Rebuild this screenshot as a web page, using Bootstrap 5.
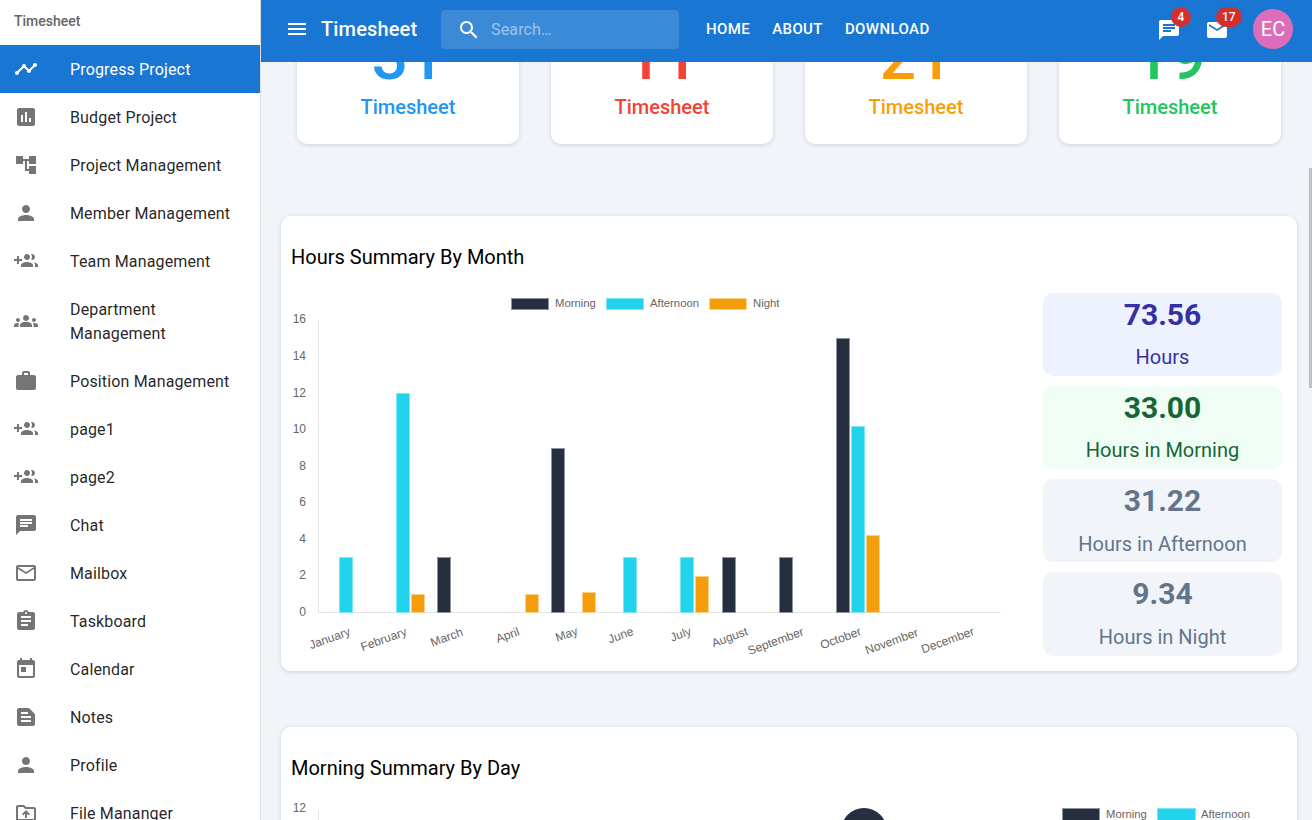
<!DOCTYPE html>
<html lang="en">
<head>
    <meta charset="UTF-8">
    <meta name="viewport" content="width=device-width, initial-scale=1.0">
    <title>Timesheet</title>
    <link href="https://cdn.jsdelivr.net/npm/bootstrap@5.3.0/dist/css/bootstrap.min.css" rel="stylesheet">
    <style>
        body { font-family: Roboto, "Liberation Sans", sans-serif; background: #f1f5f9; color: #000; }
        .ic { width: 24px; height: 24px; fill: currentColor; flex: none; }

        .side-panel { width: 261px; flex: none; background: #fff; border-right: 1px solid #d9dce0; }
        .side-title { height: 45px; padding: 13px 14px 0; font-size: 14px; line-height: 16px; font-weight: 500; color: #666; }
        .side-panel .nav-link { color: rgba(0,0,0,.87); font-size: 16px; line-height: 24px; letter-spacing: .15px; padding: 13px 16px 11px 14px; gap: 32px; }
        .side-panel .nav-link .ic { color: #757575; margin: -1px 0 1px; }
        .side-panel .nav-link.active { background: #1976d2; color: #fff; }
        .side-panel .nav-link.active .ic { color: #fff; }

        .top-bar { height: 62px; flex: none; background: #1976d2; padding: 0 19px 4px 24px; color: #fff; flex-wrap: nowrap; justify-content: flex-start; }
        .top-brand { font-size: 20px; font-weight: 500; line-height: 24px; letter-spacing: .15px; margin-left: 12px; width: 120px; }
        .top-search { width: 238px; height: 39px; margin-top: 1px; background: rgba(255,255,255,.15); border-radius: 4px; padding-left: 16px; gap: 10px; }
        .top-search .form-control { background: transparent; border: 0; box-shadow: none; padding: 0; color: #fff; font-size: 16px; letter-spacing: .15px; font-family: inherit; }
        .top-search .form-control::placeholder { color: rgba(255,255,255,.5); opacity: 1; }
        .top-links { margin-left: 27px; gap: 22px; }
        .top-links a { color: #fff; font-size: 15px; font-weight: 500; letter-spacing: .4px; text-decoration: none; text-transform: uppercase; line-height: 24px; }
        .top-icons { margin-left: auto; }
        .top-icon { width: 24px; height: 24px; }
        .top-icon .badge { top: -10px; left: 14px; height: 20px; min-width: 20px; padding: 0 6px; background: #d32f2f; font-size: 12px; font-weight: 500; line-height: 20px; border-radius: 10px; }
        .top-icon + .top-icon { margin-left: 24px; }
        .top-icon + .top-icon .badge { left: 11px; }
        .top-avatar { width: 40px; height: 40px; margin-left: 24px; background: #dc6dba; font-size: 20px; }

        .page-scroll { min-height: 0; }
        .page-inner { margin-top: -62px; padding: 0 15px 0 20px; }
        .stat-row { --bs-gutter-x: 2rem; --bs-gutter-y: 0; margin: 0 0 72px; }
        .stat-card, .panel-card { border: 0; border-radius: 10px; box-shadow: 0 1px 4px rgba(60,72,88,.2); }
        .stat-card { height: 144px; text-align: center; }
        .stat-num { font-size: 64px; line-height: 70px; font-weight: 500; margin-top: 23px; }
        .stat-name { font-size: 20px; font-weight: 500; line-height: 24px; margin-top: 2px; }
        .c-blue { color: #2196f3; }
        .c-red { color: #f44336; }
        .c-amber { color: #f89e0b; }
        .c-green { color: #22c55e; }

        .panel-card { padding: 29px 15px 15px 10px; margin-bottom: 56px; }
        .panel-title { font-size: 20px; line-height: 24px; font-weight: 400; margin: 0 0 24px; color: #000; }
        .chart-svg { display: block; flex: none; overflow: visible; }
        .chart-svg text { font-family: "Liberation Sans", Arial, sans-serif; font-size: 12px; fill: #666; }
        .chart-svg .lg { font-size: 11.3px; }
        .tile-col { width: 239px; margin-left: 10px; gap: 10px; }
        .tile { height: 83px; border-radius: 10px; text-align: center; padding-top: 4px; }
        .tile:last-child { height: 84px; }
        .tile-num { font-size: 30px; font-weight: 700; line-height: 36px; margin-bottom: 12px; }
        .tile-txt { font-size: 20px; line-height: 24px; }
        .tile-indigo { background: #eef2ff; color: #3730a3; }
        .tile-mint { background: #f0fdf4; color: #166534; }
        .tile-slate { background: #f1f5f9; color: #64748b; }
        .tile-slate .tile-num { margin-bottom: 13px; }

        .scroll-thumb { top: 168px; right: 0; width: 3px; height: 220px; background: #c1c1c1; }

        .bar-d { fill: #252f3f; stroke: #8d949f; }
        .bar-c { fill: #22d3ee; stroke: #7ce6f5; }
        .bar-o { fill: #f59e0b; stroke: #fbcf85; }
    </style>
</head>
<body class="d-flex vh-100 overflow-hidden position-relative">
    <svg class="d-none">
        <symbol id="i-timeline" viewBox="0 0 24 24"><path d="M23 8c0 1.1-.9 2-2 2-.18 0-.35-.02-.51-.07l-3.56 3.55c.05.16.07.34.07.52 0 1.1-.9 2-2 2s-2-.9-2-2c0-.18.02-.36.07-.52l-2.55-2.55c-.16.05-.34.07-.52.07s-.36-.02-.52-.07l-4.55 4.56c.05.16.07.33.07.51 0 1.1-.9 2-2 2s-2-.9-2-2 .9-2 2-2c.18 0 .35.02.51.07l4.56-4.55C8.02 9.36 8 9.18 8 9c0-1.1.9-2 2-2s2 .9 2 2c0 .18-.02.36-.07.52l2.55 2.55c.16-.05.34-.07.52-.07s.36.02.52.07l3.55-3.56C19.02 8.35 19 8.18 19 8c0-1.1.9-2 2-2s2 .9 2 2z"/></symbol>
        <symbol id="i-poll" viewBox="0 0 24 24"><path d="M19 3H5c-1.1 0-2 .9-2 2v14c0 1.1.9 2 2 2h14c1.1 0 2-.9 2-2V5c0-1.1-.9-2-2-2zM9 17H7v-7h2v7zm4 0h-2V7h2v10zm4 0h-2v-4h2v4z"/></symbol>
        <symbol id="i-tree" viewBox="0 0 24 24"><path d="M22 11V3h-7v3H9V3H2v8h7V8h2v10h4v3h7v-8h-7v3h-2V8h2v3z"/></symbol>
        <symbol id="i-person" viewBox="0 0 24 24"><path d="M12 12c2.21 0 4-1.79 4-4s-1.79-4-4-4-4 1.79-4 4 1.79 4 4 4zm0 2c-2.67 0-8 1.34-8 4v2h16v-2c0-2.66-5.33-4-8-4z"/></symbol>
        <symbol id="i-group-add" viewBox="0 0 24 24"><path d="M8 10H5V7H3v3H0v2h3v3h2v-3h3v-2zm10 1c1.66 0 2.99-1.34 2.99-3S19.66 5 18 5c-.32 0-.63.05-.91.14.57.81.9 1.79.9 2.86s-.34 2.04-.9 2.86c.28.09.59.14.91.14zm-5 0c1.66 0 2.99-1.34 2.99-3S14.66 5 13 5s-3 1.34-3 3 1.34 3 3 3zm6.62 2.16c.83.73 1.38 1.66 1.38 2.84v2h3v-2c0-1.54-2.37-2.49-4.38-2.84zM13 13c-2 0-6 1-6 3v2h12v-2c0-2-4-3-6-3z"/></symbol>
        <symbol id="i-groups" viewBox="0 0 24 24"><path d="M12 12.75c1.63 0 3.07.39 4.24.9 1.08.48 1.76 1.56 1.76 2.73V18H6v-1.61c0-1.18.68-2.26 1.76-2.73 1.17-.52 2.61-.91 4.24-.91zM4 13c1.1 0 2-.9 2-2s-.9-2-2-2-2 .9-2 2 .9 2 2 2zm1.13 1.1C4.76 14.04 4.39 14 4 14c-.99 0-1.93.21-2.78.58C.48 14.9 0 15.62 0 16.43V18h4.5v-1.61c0-.83.23-1.61.63-2.29zM20 13c1.1 0 2-.9 2-2s-.9-2-2-2-2 .9-2 2 .9 2 2 2zm4 3.43c0-.81-.48-1.53-1.22-1.85C21.93 14.21 20.99 14 20 14c-.39 0-.76.04-1.13.1.4.68.63 1.46.63 2.29V18H24v-1.57zM12 6c1.66 0 3 1.34 3 3s-1.34 3-3 3-3-1.34-3-3 1.34-3 3-3z"/></symbol>
        <symbol id="i-work" viewBox="0 0 24 24"><path d="M20 6h-4V4c0-1.11-.89-2-2-2h-4c-1.11 0-2 .89-2 2v2H4c-1.11 0-1.99.89-1.99 2L2 19c0 1.11.89 2 2 2h16c1.11 0 2-.89 2-2V8c0-1.11-.89-2-2-2zm-6 0h-4V4h4v2z"/></symbol>
        <symbol id="i-chat" viewBox="0 0 24 24"><path d="M20 2H4c-1.1 0-1.99.9-1.99 2L2 22l4-4h14c1.1 0 2-.9 2-2V4c0-1.1-.9-2-2-2zM6 9h12v2H6V9zm8 5H6v-2h8v2zm4-6H6V6h12v2z"/></symbol>
        <symbol id="i-mail-line" viewBox="0 0 24 24"><path d="M20 4H4c-1.1 0-1.99.9-1.99 2L2 18c0 1.1.9 2 2 2h16c1.1 0 2-.9 2-2V6c0-1.1-.9-2-2-2zm0 14H4V8l8 5 8-5v10zm-8-7L4 6h16l-8 5z"/></symbol>
        <symbol id="i-mail" viewBox="0 0 24 24"><path d="M20 4H4c-1.1 0-1.99.9-1.99 2L2 18c0 1.1.9 2 2 2h16c1.1 0 2-.9 2-2V6c0-1.1-.9-2-2-2zm0 4l-8 5-8-5V6l8 5 8-5v2z"/></symbol>
        <symbol id="i-task" viewBox="0 0 24 24"><path d="M19 3h-4.18C14.4 1.84 13.3 1 12 1c-1.3 0-2.4.84-2.82 2H5c-1.1 0-2 .9-2 2v14c0 1.1.9 2 2 2h14c1.1 0 2-.9 2-2V5c0-1.1-.9-2-2-2zm-7 0c.55 0 1 .45 1 1s-.45 1-1 1-1-.45-1-1 .45-1 1-1zm2 14H7v-2h7v2zm3-4H7v-2h10v2zm0-4H7V7h10v2z"/></symbol>
        <symbol id="i-today" viewBox="0 0 24 24"><path d="M19 3h-1V1h-2v2H8V1H6v2H5c-1.11 0-1.99.9-1.99 2L3 19c0 1.1.89 2 2 2h14c1.1 0 2-.9 2-2V5c0-1.1-.9-2-2-2zm0 16H5V8h14v11zM7 10h5v5H7z"/></symbol>
        <symbol id="i-note" viewBox="0 0 24 24"><path d="M20.41 8.41l-4.83-4.83C15.21 3.21 14.7 3 14.17 3H5c-1.1 0-2 .9-2 2v14c0 1.1.9 2 2 2h14c1.1 0 2-.9 2-2V9.83c0-.53-.21-1.04-.59-1.42zM7 7h7v2H7V7zm10 10H7v-2h10v2zm0-4H7v-2h10v2z"/></symbol>
        <symbol id="i-folder" viewBox="0 0 24 24"><path d="M20 6h-8l-2-2H4c-1.1 0-1.99.9-1.99 2L2 18c0 1.1.9 2 2 2h16c1.1 0 2-.9 2-2V8c0-1.1-.9-2-2-2zm0 12H4V6h5.17l2 2H20v10zM9.41 14.42L11 12.84V17h2v-4.16l1.59 1.59L16 13.01 12.01 9 8 13.01l1.41 1.41z"/></symbol>
        <symbol id="i-menu" viewBox="0 0 24 24"><path d="M3 18h18v-2H3v2zm0-5h18v-2H3v2zm0-7v2h18V6H3z"/></symbol>
        <symbol id="i-search" viewBox="0 0 24 24"><path d="M15.5 14h-.79l-.28-.27C15.41 12.59 16 11.11 16 9.5 16 5.91 13.09 3 9.5 3S3 5.91 3 9.5 5.91 16 9.5 16c1.61 0 3.09-.59 4.23-1.57l.27.28v.79l5 4.99L20.49 19l-4.99-5zm-6 0C7.01 14 5 11.99 5 9.5S7.01 5 9.5 5 14 7.01 14 9.5 11.99 14 9.5 14z"/></symbol>
    </svg>

    <aside class="side-panel overflow-hidden">
        <div class="side-title">Timesheet</div>
        <nav class="nav flex-column flex-nowrap">
            <a class="nav-link d-flex align-items-center active" href="#"><svg class="ic"><use href="#i-timeline"/></svg><span>Progress Project</span></a>
            <a class="nav-link d-flex align-items-center" href="#"><svg class="ic"><use href="#i-poll"/></svg><span>Budget Project</span></a>
            <a class="nav-link d-flex align-items-center" href="#"><svg class="ic"><use href="#i-tree"/></svg><span>Project Management</span></a>
            <a class="nav-link d-flex align-items-center" href="#"><svg class="ic"><use href="#i-person"/></svg><span>Member Management</span></a>
            <a class="nav-link d-flex align-items-center" href="#"><svg class="ic"><use href="#i-group-add"/></svg><span>Team Management</span></a>
            <a class="nav-link d-flex align-items-center" href="#"><svg class="ic"><use href="#i-groups"/></svg><span>Department Management</span></a>
            <a class="nav-link d-flex align-items-center" href="#"><svg class="ic"><use href="#i-work"/></svg><span>Position Management</span></a>
            <a class="nav-link d-flex align-items-center" href="#"><svg class="ic"><use href="#i-group-add"/></svg><span>page1</span></a>
            <a class="nav-link d-flex align-items-center" href="#"><svg class="ic"><use href="#i-group-add"/></svg><span>page2</span></a>
            <a class="nav-link d-flex align-items-center" href="#"><svg class="ic"><use href="#i-chat"/></svg><span>Chat</span></a>
            <a class="nav-link d-flex align-items-center" href="#"><svg class="ic"><use href="#i-mail-line"/></svg><span>Mailbox</span></a>
            <a class="nav-link d-flex align-items-center" href="#"><svg class="ic"><use href="#i-task"/></svg><span>Taskboard</span></a>
            <a class="nav-link d-flex align-items-center" href="#"><svg class="ic"><use href="#i-today"/></svg><span>Calendar</span></a>
            <a class="nav-link d-flex align-items-center" href="#"><svg class="ic"><use href="#i-note"/></svg><span>Notes</span></a>
            <a class="nav-link d-flex align-items-center" href="#"><svg class="ic"><use href="#i-person"/></svg><span>Profile</span></a>
            <a class="nav-link d-flex align-items-center" href="#"><svg class="ic"><use href="#i-folder"/></svg><span>File Mananger</span></a>
        </nav>
    </aside>

    <div class="flex-grow-1 d-flex flex-column overflow-hidden">
        <header class="navbar top-bar align-items-center position-relative z-1">
            <svg class="ic"><use href="#i-menu"/></svg>
            <div class="top-brand">Timesheet</div>
            <div class="top-search d-flex align-items-center">
                <svg class="ic"><use href="#i-search"/></svg>
                <input class="form-control" type="text" placeholder="Search…">
            </div>
            <div class="top-links d-flex">
                <a href="#">Home</a>
                <a href="#">About</a>
                <a href="#">Download</a>
            </div>
            <div class="top-icons d-flex align-items-center">
                <div class="top-icon position-relative">
                    <svg class="ic"><use href="#i-chat"/></svg>
                    <span class="badge position-absolute">4</span>
                </div>
                <div class="top-icon position-relative">
                    <svg class="ic"><use href="#i-mail"/></svg>
                    <span class="badge position-absolute">17</span>
                </div>
                <div class="top-avatar rounded-circle d-flex align-items-center justify-content-center">EC</div>
            </div>
        </header>

        <main class="page-scroll flex-grow-1">
            <div class="page-inner">
                <div class="row stat-row">
                    <div class="col-3"><div class="card stat-card c-blue"><div class="stat-num">31</div><div class="stat-name">Timesheet</div></div></div>
                    <div class="col-3"><div class="card stat-card c-red"><div class="stat-num">11</div><div class="stat-name">Timesheet</div></div></div>
                    <div class="col-3"><div class="card stat-card c-amber"><div class="stat-num">21</div><div class="stat-name">Timesheet</div></div></div>
                    <div class="col-3"><div class="card stat-card c-green"><div class="stat-num">19</div><div class="stat-name">Timesheet</div></div></div>
                </div>

                <div class="card panel-card">
                    <h5 class="panel-title">Hours Summary By Month</h5>
                    <div class="d-flex">
                        <svg class="chart-svg" width="742" height="363" viewBox="291 293 742 363">
                            <rect x="511.5" y="298.5" width="37" height="11" class="bar-d"/>
                            <text class="lg" x="555" y="307">Morning</text>
                            <rect x="606.5" y="298.5" width="37" height="11" class="bar-c"/>
                            <text class="lg" x="650" y="307">Afternoon</text>
                            <rect x="709.5" y="298.5" width="37" height="11" class="bar-o"/>
                            <text class="lg" x="753" y="307">Night</text>

                            <g text-anchor="end">
                                <text x="306" y="323">16</text>
                                <text x="306" y="360">14</text>
                                <text x="306" y="397">12</text>
                                <text x="306" y="433">10</text>
                                <text x="306" y="470">8</text>
                                <text x="306" y="506">6</text>
                                <text x="306" y="543">4</text>
                                <text x="306" y="579">2</text>
                                <text x="306" y="616">0</text>
                            </g>
                            <path d="M318.5 320V612.5H1001" fill="none" stroke="#e5e5e5"/>

                            <rect x="339.5" y="557.5" width="13" height="55" class="bar-c"/>
                            <rect x="396.5" y="393.5" width="13" height="219" class="bar-c"/>
                            <rect x="411.5" y="594.5" width="13" height="18" class="bar-o"/>
                            <rect x="437.5" y="557.5" width="13" height="55" class="bar-d"/>
                            <rect x="525.5" y="594.5" width="13" height="18" class="bar-o"/>
                            <rect x="551.5" y="448.5" width="13" height="164" class="bar-d"/>
                            <rect x="582.5" y="592.5" width="13" height="20" class="bar-o"/>
                            <rect x="623.5" y="557.5" width="13" height="55" class="bar-c"/>
                            <rect x="680.5" y="557.5" width="13" height="55" class="bar-c"/>
                            <rect x="695.5" y="576.5" width="13" height="36" class="bar-o"/>
                            <rect x="722.5" y="557.5" width="13" height="55" class="bar-d"/>
                            <rect x="779.5" y="557.5" width="13" height="55" class="bar-d"/>
                            <rect x="836.5" y="338.5" width="13" height="274" class="bar-d"/>
                            <rect x="851.5" y="426.5" width="13" height="186" class="bar-c"/>
                            <rect x="866.5" y="535.5" width="13" height="77" class="bar-o"/>

                            <g text-anchor="middle">
                                <text transform="translate(331 642) rotate(-20)">January</text>
                                <text transform="translate(385 643) rotate(-20)">February</text>
                                <text transform="translate(448 641) rotate(-20)">March</text>
                                <text transform="translate(509 639) rotate(-20)">April</text>
                                <text transform="translate(568 638) rotate(-20)">May</text>
                                <text transform="translate(622 639) rotate(-20)">June</text>
                                <text transform="translate(682 638) rotate(-20)">July</text>
                                <text transform="translate(731 641) rotate(-20)">August</text>
                                <text transform="translate(777 645) rotate(-20)">September</text>
                                <text transform="translate(842 642) rotate(-20)">October</text>
                                <text transform="translate(893 645) rotate(-20)">November</text>
                                <text transform="translate(949 644) rotate(-20)">December</text>
                            </g>
                        </svg>
                        <div class="tile-col d-flex flex-column">
                            <div class="tile tile-indigo"><div class="tile-num">73.56</div><div class="tile-txt">Hours</div></div>
                            <div class="tile tile-mint"><div class="tile-num">33.00</div><div class="tile-txt">Hours in Morning</div></div>
                            <div class="tile tile-slate"><div class="tile-num">31.22</div><div class="tile-txt">Hours in Afternoon</div></div>
                            <div class="tile tile-slate"><div class="tile-num">9.34</div><div class="tile-txt">Hours in Night</div></div>
                        </div>
                    </div>
                </div>

                <div class="card panel-card">
                    <h5 class="panel-title">Morning Summary By Day</h5>
                    <svg class="chart-svg" width="1000" height="200" viewBox="291 804 1000 200">
                        <text x="306" y="812" text-anchor="end">12</text>
                        <path d="M318.5 810V1000" fill="none" stroke="#e5e5e5"/>
                        <circle cx="864" cy="831" r="23" fill="#252f3f"/>
                        <rect x="1062.5" y="808.5" width="37" height="12" class="bar-d"/>
                        <text class="lg" x="1106" y="818">Morning</text>
                        <rect x="1157.5" y="808.5" width="38" height="12" class="bar-c"/>
                        <text class="lg" x="1201" y="818">Afternoon</text>
                    </svg>
                </div>
            </div>
        </main>
    </div>

    <div class="scroll-thumb position-absolute"></div>

    <script src="https://cdn.jsdelivr.net/npm/bootstrap@5.3.0/dist/js/bootstrap.bundle.min.js"></script>
</body>
</html>
